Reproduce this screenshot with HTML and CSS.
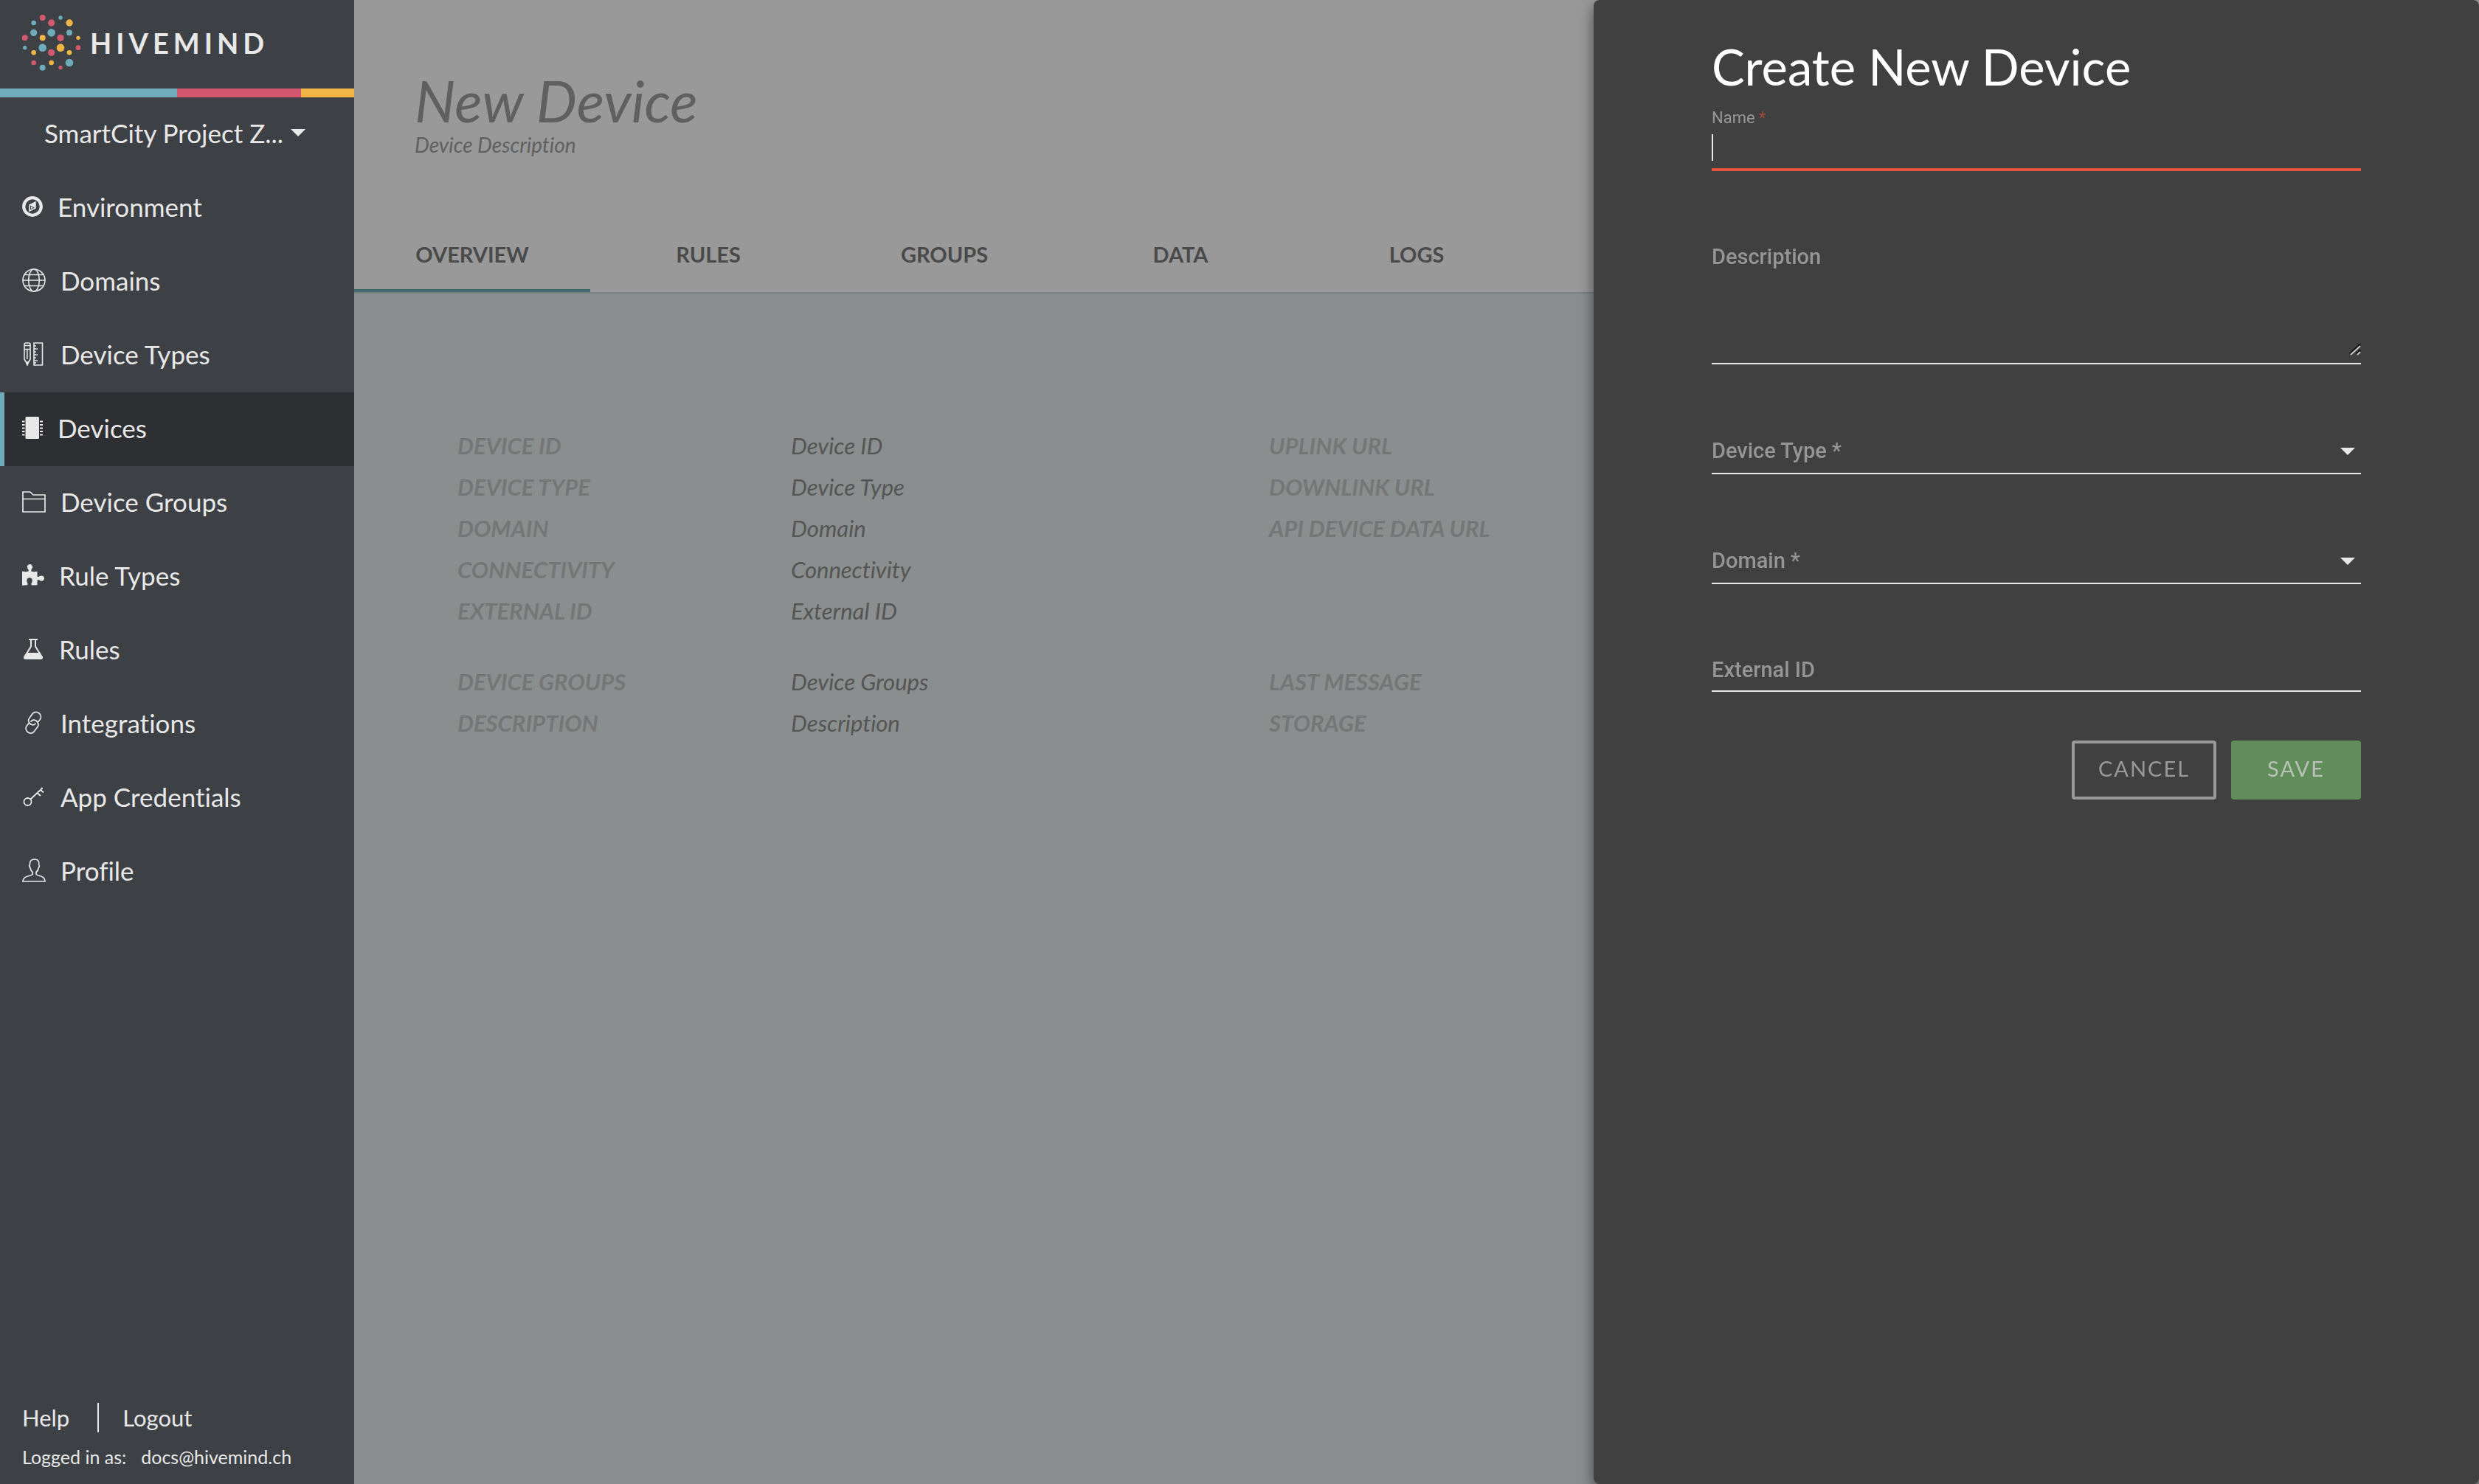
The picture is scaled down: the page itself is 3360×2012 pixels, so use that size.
FILE: index.html
```html
<!DOCTYPE html>
<html lang="en">
<head>
<meta charset="utf-8">
<title>Hivemind – New Device</title>
<link rel="stylesheet" href="styles.css">
</head>
<body>
<div class="app">
  <aside class="sidebar">
    <a class="brand" href="#">
      <svg class="brand-mark" viewBox="90 60 240 228" aria-hidden="true">
        <g fill="#d1586e"><circle cx="173" cy="72" r="12"/><circle cx="209" cy="93" r="14"/><circle cx="101" cy="154" r="12"/><circle cx="246" cy="154" r="14"/><circle cx="318" cy="194" r="10"/><circle cx="209" cy="214" r="14"/><circle cx="137" cy="255" r="10"/><circle cx="246" cy="275" r="8"/></g>
        <g fill="#6eacbc"><circle cx="246" cy="72" r="8"/><circle cx="137" cy="93" r="10"/><circle cx="137" cy="133" r="14"/><circle cx="209" cy="133" r="16"/><circle cx="282" cy="133" r="12"/><circle cx="101" cy="194" r="8"/><circle cx="173" cy="194" r="16"/><circle cx="282" cy="255" r="16"/><circle cx="173" cy="275" r="12"/></g>
        <g fill="#f1b447"><circle cx="282" cy="93" r="14"/><circle cx="173" cy="154" r="12"/><circle cx="318" cy="154" r="8"/><circle cx="246" cy="194" r="16"/><circle cx="137" cy="214" r="10"/><circle cx="282" cy="214" r="10"/><circle cx="209" cy="255" r="10"/></g>
      </svg>
      <span class="brand-name">HIVEMIND</span>
    </a>
    <div class="stripe"><i class="stripe-blue"></i><i class="stripe-pink"></i><i class="stripe-yellow"></i></div>
    <button class="project" type="button">SmartCity Project Z...<span class="caret"></span></button>
    <nav class="nav">
      <a class="nav-item" href="#">
        <svg class="icon" width="28" height="28" viewBox="0 0 28 28"><circle cx="14" cy="14" r="11.8" fill="none" stroke="currentColor" stroke-width="4.2"/><path fill="currentColor" fill-rule="evenodd" d="M18.7 6.8v9.8L9.3 21.2V11.5zM11 12.4v6.2l6-3.1z"/><path fill="currentColor" d="M12 14l3 1.6-3 1.6z"/></svg>Environment</a>
      <a class="nav-item" href="#">
        <svg class="icon" width="32" height="32" viewBox="0 0 32 32" fill="none" stroke="currentColor" stroke-width="1.6"><circle cx="16" cy="16" r="15"/><ellipse cx="16" cy="16" rx="7.3" ry="15"/><path d="M1 16h30M3.5 8.5h25M3.5 23.5h25"/></svg>Domains</a>
      <a class="nav-item" href="#">
        <svg class="icon" width="32" height="32" viewBox="0 0 32 32" fill="none" stroke="currentColor" stroke-width="1.6"><path d="M3 23V3q0-2 2-2h4q2 0 2 2v20l-4 7zM3 4.5h8M3 9.5h8M6.8 10v13M16 1h11.5v30H16zM16 5h3M16 9h5M16 13h3M16 17h5M16 21h3M16 25h5M16 28h3"/><path fill="currentColor" d="M5.500 27h3l-1.500 4z"/></svg>Device Types</a>
      <a class="nav-item nav-item-active" href="#" aria-current="page">
        <svg class="icon" width="28" height="32" viewBox="0 0 28 32"><rect x="4.500" y="1" width="18.500" height="30" rx="1.500" fill="currentColor"/><path d="M0 7.500h3.500M0 12h3.500M0 16.500h3.500M0 21h3.500M0 25.500h3.500M24 7.500h4M24 12h4M24 16.500h4M24 21h4M24 25.500h4" stroke="currentColor" stroke-width="2"/></svg>Devices</a>
      <a class="nav-item" href="#">
        <svg class="icon" width="32" height="32" viewBox="0 0 32 32" fill="none" stroke="currentColor" stroke-width="1.700"><path d="M1 30V3h10l4 4h16v23zM1 12.500h30"/></svg>Device Groups</a>
      <a class="nav-item" href="#">
        <svg class="icon" width="30" height="30" viewBox="0 0 30 30"><path fill="currentColor" d="M0 9.500q4.500 1 8 .3Q9.500 9 8 6.500 5.500 3 8 1q2.500-2 5 0 2 2.500 0 5.500-1.500 2.500 0 3.300 3 .7 7.500 0v6.700q1 1 3-.3 3.500-1.700 5.500.3 2 3 0 5.300-2.500 1.700-5.500 0-2.200-1.500-3 0v6.500l-7 .2q-2-.6-.7-3Q15 21.500 12.500 19q-2.500-1.500-4.800 0-2.500 2.500-.7 6 1.500 2.700-.5 3.200L0 28.700z"/></svg>Rule Types</a>
      <a class="nav-item" href="#">
        <svg class="icon" width="30" height="30" viewBox="0 0 30 30"><path fill="none" stroke="currentColor" stroke-width="2" d="M9 2h12M12 2v9.500L3 26q-.5 2 2 2h20q2.500 0 2-2l-9-14.500V2"/><path fill="currentColor" d="M7.500 20h15l4.500 7.500H3z"/></svg>Rules</a>
      <a class="nav-item" href="#">
        <svg class="icon" width="32" height="32" viewBox="0 0 32 32" fill="none" stroke="currentColor" stroke-width="1.700" stroke-linecap="round"><path d="M11 17.500C8 15 8 11.500 10 9.200l4.500-6C17 1 20 .8 23 3c3 2.500 3 6 1.200 8.500L21 15.500"/><path d="M19.500 13.500c3 3 3 6 1.300 8.300l-4.600 6c-2.500 2.600-5.700 3-8.700.7-3-2.500-3-6-1.200-8.500L9.500 16"/><path d="M11 17.500c3 1.800 5.500 1.500 7-.3M19.500 13.500c-3-1.800-6-1.300-7.500.6"/></svg>Integrations</a>
      <a class="nav-item" href="#">
        <svg class="icon" width="32" height="32" viewBox="0 0 32 32" fill="none" stroke="currentColor" stroke-width="1.800"><circle cx="7.500" cy="23" r="5"/><path d="M11.500 19.500L27.500 4.500M25 7l4 3.500M20.500 11l4.500 4M26 5l1.500-1"/></svg>App Credentials</a>
      <a class="nav-item" href="#">
        <svg class="icon" width="32" height="32" viewBox="0 0 32 32" fill="none" stroke="currentColor" stroke-width="1.700"><path d="M1 31h30c0-4.500-3-6.500-7-7.500-3-.8-5-1.500-5-2.500v-2.500c2-1.500 3-4 3.300-6 1.200-1 1.400-3 .4-4C23.500 4 21.500 1 17 1c-5 0-7 3-6.500 7-1 1-.8 3 .4 4.500.5 2.500 1.600 4.700 3.300 6V21c0 1-2 1.700-5 2.500-5 1-8.200 3-8.200 7.500z"/></svg>Profile</a>
    </nav>
    <footer class="side-footer">
      <div class="side-links"><a href="#">Help</a><a class="logout" href="#">Logout</a></div>
      <p class="user"><span>Logged in as:</span><span>docs@hivemind.ch</span></p>
    </footer>
  </aside>

  <main class="main">
    <header class="page-head">
      <h1 class="page-title">New Device</h1>
      <p class="page-sub">Device Description</p>
      <nav class="tabs">
        <a class="tab tab-active" href="#">OVERVIEW</a>
        <a class="tab" href="#">RULES</a>
        <a class="tab" href="#">GROUPS</a>
        <a class="tab" href="#">DATA</a>
        <a class="tab" href="#">LOGS</a>
      </nav>
    </header>
    <section class="details">
      <dl class="facts">
        <dt>DEVICE ID</dt><dd>Device ID</dd>
        <dt>DEVICE TYPE</dt><dd>Device Type</dd>
        <dt>DOMAIN</dt><dd>Domain</dd>
        <dt>CONNECTIVITY</dt><dd>Connectivity</dd>
        <dt>EXTERNAL ID</dt><dd>External ID</dd>
      </dl>
      <dl class="facts">
        <dt>UPLINK URL</dt><dd></dd>
        <dt>DOWNLINK URL</dt><dd></dd>
        <dt>API DEVICE DATA URL</dt><dd></dd>
      </dl>
      <dl class="facts">
        <dt>DEVICE GROUPS</dt><dd>Device Groups</dd>
        <dt>DESCRIPTION</dt><dd>Description</dd>
      </dl>
      <dl class="facts">
        <dt>LAST MESSAGE</dt><dd></dd>
        <dt>STORAGE</dt><dd></dd>
      </dl>
    </section>
  </main>
</div>

<aside class="drawer">
  <form class="form">
    <h2 class="form-title">Create New Device</h2>
    <div class="field-name">
      <label class="label-small" for="name">Name <span class="required">*</span></label>
      <input class="name-input" id="name" type="text">
    </div>
    <div class="field field-area">
      <label class="label" for="description">Description</label>
      <textarea class="control" id="description"></textarea>
      <svg class="grip" width="16" height="16" viewBox="0 0 16 16" aria-hidden="true"><path d="M1 14L15 1M10 14l5-5" stroke="#111" stroke-width="3"/><path d="M2 15L15 3M11 15l4-4" stroke="#ccc" stroke-width="2"/></svg>
    </div>
    <div class="field field-select">
      <label class="label" for="type">Device Type *</label>
      <select class="control" id="type"><option></option></select>
      <span class="caret"></span>
    </div>
    <div class="field field-select">
      <label class="label" for="domain">Domain *</label>
      <select class="control" id="domain"><option></option></select>
      <span class="caret"></span>
    </div>
    <div class="field field-text">
      <label class="label" for="external">External ID</label>
      <input class="control" id="external" type="text">
    </div>
    <div class="actions">
      <button class="btn btn-cancel" type="button">CANCEL</button>
      <button class="btn btn-save" type="submit">SAVE</button>
    </div>
  </form>
</aside>
</body>
</html>
```
FILE: styles.css
```css
* { box-sizing: border-box; }

body {
  margin: 0;
  background: #8a8e8e;
  color: #e8e8e8;
  font-family: Lato, "Open Sans", sans-serif;
  font-size: 29px;
  font-variant-ligatures: none;
  overflow: hidden;
}

a { color: inherit; text-decoration: none; }
h1, h2, p, dl, dd { margin: 0; font-weight: 400; }

.app { display: flex; min-height: 100vh; }

/* Sidebar */
.sidebar {
  display: flex;
  flex-direction: column;
  flex: 0 0 480px;
  background: #3d4045;
}

.brand {
  display: flex;
  align-items: center;
  gap: 12px;
  height: 120px;
  padding: 0 30px 4px;
}
.brand-mark { width: 80px; height: 76px; }
.brand-name { font-size: 38px; font-weight: 700; letter-spacing: 6px; }

.stripe { display: flex; height: 12px; }
.stripe-blue { flex: 240; background: #6eacbc; }
.stripe-pink { flex: 168; background: #d1586e; }
.stripe-yellow { flex: 72; background: #f1b447; }

.project {
  display: flex;
  align-items: center;
  gap: 10px;
  height: 100px;
  padding: 0 60px 4px;
  border: 0;
  background: none;
  color: inherit;
  font: inherit;
  font-size: 35px;
}
.caret {
  width: 20px;
  height: 10px;
  background: #e8e8e8;
  clip-path: polygon(0 0, 100% 0, 50% 100%);
}

.nav-item {
  display: flex;
  align-items: center;
  gap: 20px;
  height: 100px;
  padding: 0 0 4px 30px;
  font-size: 35px;
}
.nav-item-active {
  padding-left: 24px;
  border-left: 6px solid #6eacbc;
  background: #2e2f33;
}
.icon { flex: none; }

.side-footer { margin-top: auto; padding: 0 30px 22px; }
.side-links { display: flex; font-size: 31px; line-height: 40px; }
.logout { margin-left: 38px; padding-left: 32px; border-left: 2px solid #e8e8e8; }
.user { display: flex; gap: 20px; margin-top: 18px; font-size: 25px; line-height: 30px; }

/* Page */
.main { flex: 1; min-width: 0; }
.page-head {
  background: #999;
  border-bottom: 2px solid #7b8081;
  color: #606060;
  font-style: italic;
}
.page-title { padding: 92px 82px 0; font-size: 78px; line-height: 88px; }
.page-sub { padding: 0 82px; font-size: 28px; line-height: 32px; }
.tabs { display: flex; margin-top: 84px; font-style: normal; }
.tab {
  flex: 0 0 320px;
  height: 100px;
  border-bottom: 4px solid transparent;
  color: #4a4a4b;
  font-weight: 700;
  line-height: 98px;
  text-align: center;
}
.tab-active { border-color: #42686f; }

.details {
  display: grid;
  grid-template-columns: 1100px 1fr;
  row-gap: 40px;
  padding: 178px 140px;
  font-size: 31px;
  font-style: italic;
  line-height: 56px;
}
.facts {
  display: grid;
  grid-template-columns: 452px 1fr;
  align-content: start;
  color: #555;
}
.facts dt { color: #757777; font-weight: 700; white-space: nowrap; }

/* Drawer */
.drawer {
  position: fixed;
  inset: 0 0 0 auto;
  width: 1200px;
  padding: 50px 160px;
  border-radius: 8px;
  background: #404040;
  box-shadow: 0 8px 20px rgba(0, 0, 0, 0.5);
  overflow: auto;
}
.form { display: flex; flex-direction: column; gap: 84px; font-family: Roboto, sans-serif; }
.form-title {
  margin-bottom: -66px;
  color: #fff;
  font-family: Lato, sans-serif;
  font-size: 67px;
  line-height: 80px;
}
.field-name { display: flex; flex-direction: column; }
.label-small { color: #979797; font-size: 22px; line-height: 24px; }
.required { color: #a3493e; }
.name-input {
  height: 60px;
  padding: 10px 0;
  border: 0;
  border-bottom: 4px solid #e45241;
  background: linear-gradient(#e8e8e8, #e8e8e8) 0 10px / 2px 36px no-repeat;
  color: inherit;
  font: inherit;
}

.field { display: grid; }
.field > * { grid-area: 1 / 1; }
.field-area { height: 178px; }
.field-select { height: 65px; }
.field-text { height: 62px; }
.label {
  align-self: end;
  justify-self: start;
  margin-bottom: 16px;
  color: #959595;
  font-weight: 500;
  line-height: 32px;
  pointer-events: none;
}
.field-area .label { align-self: start; margin-top: 16px; }
.field-text .label { margin-bottom: 14px; }
.control {
  width: 100%;
  height: 100%;
  padding: 0;
  border: 0;
  border-bottom: 2px solid #e8e8e8;
  border-radius: 0;
  background: none;
  color: inherit;
  font: inherit;
  appearance: none;
  resize: none;
}
.control:focus, .name-input:focus { outline: none; }
.grip { place-self: end; margin-bottom: 12px; }
.field .caret { place-self: end; margin: 0 8px 26px; pointer-events: none; }

.actions { display: flex; justify-content: flex-end; gap: 20px; margin-top: -18px; }
.btn {
  height: 80px;
  padding: 0 0 6px;
  border: 0;
  border-radius: 4px;
  font-family: Lato, sans-serif;
  font-size: 29px;
  letter-spacing: 2px;
}
.btn-cancel { width: 196px; border: 4px solid #999; background: none; color: #999; }
.btn-save { width: 176px; background: #618d5a; color: #b9c2b7; }
```
